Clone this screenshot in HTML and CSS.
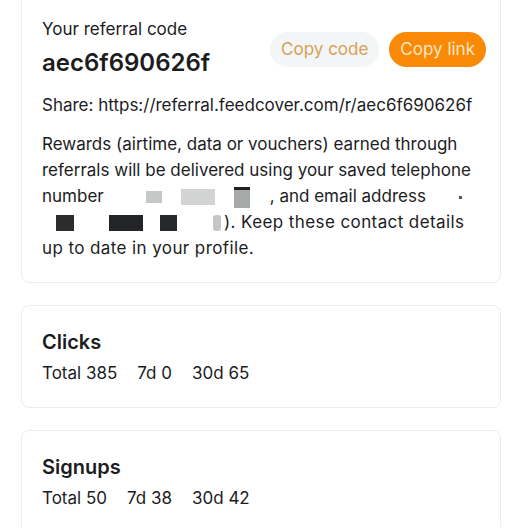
FILE: index.html
```html
<!DOCTYPE html>
<html lang="en">
<head>
    <meta charset="UTF-8">
    <meta name="viewport" content="width=device-width, initial-scale=1.0">
    <title>Referrals</title>
    <link rel="stylesheet" href="styles.css">
</head>
<body>
    <div class="page">
        <div class="card referral">
            <div class="code-row">
                <div>
                    <div class="label">Your referral code</div>
                    <div class="code">aec6f690626f</div>
                </div>
                <div class="actions">
                    <button class="btn-soft">Copy code</button>
                    <button class="btn-main">Copy link</button>
                </div>
            </div>
            <p class="share">Share: https://referral.feedcover.com/r/aec6f690626f</p>
            <p class="note">
                Rewards (airtime, data or vouchers) earned through referrals will be delivered using your saved telephone number<span class="redact phone"><i class="b1"></i><i class="b2"></i><i class="b3"></i></span>, and email address<span class="redact mail1"><i class="dot"></i></span>
                <span class="redact mail2"><i class="d1"></i><i class="d2"></i><i class="d3"></i><i class="d4"></i></span><span class="tail">). Keep these contact details up to date in your profile.</span>
            </p>
        </div>

        <div class="card stat">
            <h3>Clicks</h3>
            <div class="nums">
                <span>Total 385</span>
                <span>7d 0</span>
                <span>30d 65</span>
            </div>
        </div>

        <div class="card stat">
            <h3>Signups</h3>
            <div class="nums">
                <span>Total 50</span>
                <span>7d 38</span>
                <span>30d 42</span>
            </div>
        </div>
    </div>
</body>
</html>
```

FILE: styles.css
```css
body {
    font-family: Inter, "Noto Sans", sans-serif;
    background-color: white;
    color: #1c1c1e;
    margin: 0;
}
.page {
    padding: 0 27px 0 21px;
    margin-top: -20px;
    display: flex;
    flex-direction: column;
    gap: 22px;
}
.card {
    border: 1px solid #ececec;
    border-radius: 8px;
    padding: 20px 20px;
    background: white;
}
.referral {
    padding-top: 38px;
    padding-bottom: 21px;
}
.code-row {
    display: flex;
    justify-content: space-between;
    align-items: center;
}
.label {
    font-size: 17px;
    line-height: 20px;
}
.code {
    font-size: 24px;
    font-weight: 600;
    margin-top: 9px;
    line-height: 30px;
}
.actions {
    display: flex;
    gap: 10px;
    margin-top: 1px;
    margin-right: -6px;
}
.actions button {
    font-family: inherit;
    font-size: 17px;
    border: none;
    border-radius: 18px;
    height: 35px;
    padding: 0 11px;
}
.btn-soft {
    background-color: #f2f6f6;
    color: #d9a055;
}
.btn-main {
    background-color: #f98a07;
    color: #fde6c2;
}
.share {
    font-size: 17px;
    margin: 15px 0 0;
    line-height: 24px;
}
.note {
    font-size: 17px;
    line-height: 26px;
    margin: 14px 0 0;
}
.note .tail {
    letter-spacing: 0.4px;
}
.redact {
    display: inline-flex;
    align-items: center;
    vertical-align: middle;
    height: 20px;
}
.redact i {
    display: block;
}
.phone {
    width: 166px;
}
.phone .b1 { width: 16px; height: 12px; margin-left: 42px; background: #c6c8c8; }
.phone .b2 { width: 34px; height: 16px; margin-left: 19px; background: #d2d4d4; }
.phone .b3 { width: 16px; height: 18px; margin-left: 19px; background: #a5a9a9; border-top: 3px solid #222; }
.mail1 { width: 36px; justify-content: flex-end; }
.mail1 .dot { width: 3px; height: 3px; background: #555; }
.mail2 { width: 186px; margin-left: -4px; }
.mail2 .d1 { width: 18px; height: 16px; margin-left: 18px; background: #2a2c2e; }
.mail2 .d2 { width: 34px; height: 16px; margin-left: 35px; background: #222426; }
.mail2 .d3 { width: 17px; height: 16px; margin-left: 17px; background: #26282a; }
.mail2 .d4 { width: 8px; height: 16px; margin-left: 36px; background: #c4c6c6; border-radius: 3px; }
.stat h3 {
    font-size: 20px;
    font-weight: 600;
    margin: 3px 0 0;
    line-height: 26px;
}
.stat .nums {
    display: flex;
    gap: 20px;
    font-size: 17px;
    margin-top: 8px;
    line-height: 20px;
    padding-bottom: 4px;
}
```
